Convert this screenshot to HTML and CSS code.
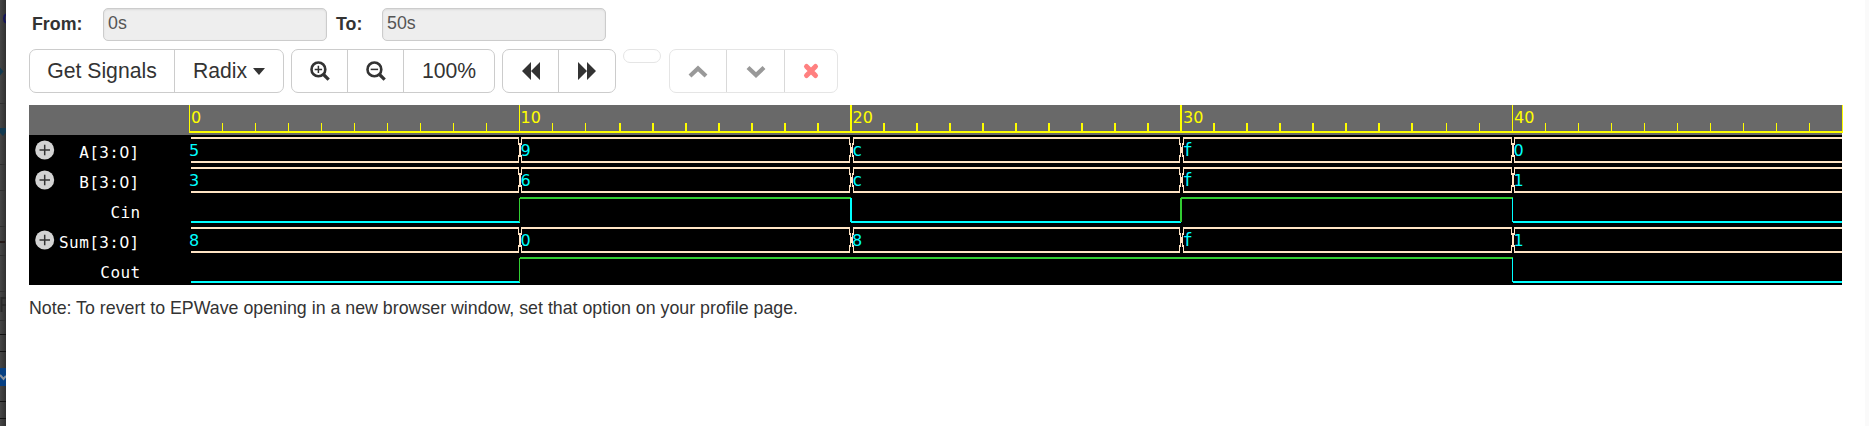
FILE: index.html
```
<!DOCTYPE html>
<html lang="en">
<head>
<meta charset="utf-8">
<title>EPWave</title>
<link rel="stylesheet" href="styles.css">
</head>
<body>
<div class="page">
  <aside class="backdrop">
    <svg width="6" height="426" viewBox="0 0 6 426">
      <path class="rule" d="M0 103.500h6M0 164.500h6M0 190.500h6M0 226.500h6M0 255.500h6M0 291.500h6M0 320.500h6"/>
      <path class="rule-dark" d="M0 334.500h6M0 351.500h6M0 401.500h6M0 418.500h6"/>
      <path class="mark" d="M0 67.500l3.500 4-3.500 4zM0 128h6v4l-3 4-3-3z"/>
      <path class="letter" d="M6 14.500q-2 1-2 4t2 4"/>
      <path class="dash" d="M0 241h5v2h-5z"/>
      <path class="box" d="M0 368h6v18H0z"/>
      <path class="check" d="M0 375l3.500 4L6 376"/>
      <path class="glyph" d="M1.500 312v-14h4.500M2 305h4"/>
    </svg>
  </aside>
  <main class="dialog">
    <form class="range">
      <label class="from" for="from">From:</label><input id="from" class="field" value="0s" readonly>
      <label class="to" for="to">To:</label><input id="to" class="field" value="50s" readonly>
    </form>
    <div class="toolbar">
      <div class="group">
        <button class="btn get">Get Signals</button>
        <button class="btn radix">Radix <span class="caret"></span></button>
      </div>
      <div class="group">
        <button class="btn first"><svg width="20" height="20" viewBox="0 0 20 20"><g fill="none" stroke="#333"><circle cx="8.400" cy="8.400" r="6.900" stroke-width="2.600"/><path d="M13 13l5.700 5.700" stroke-width="3.200"/><path d="M4.700 8.400h7.400M8.400 4.700v7.400" stroke-width="1.500"/></g></svg></button>
        <button class="btn zoom"><svg width="20" height="20" viewBox="0 0 20 20"><g fill="none" stroke="#333"><circle cx="8.400" cy="8.400" r="6.900" stroke-width="2.600"/><path d="M13 13l5.700 5.700" stroke-width="3.200"/><path d="M4.700 8.400h7.400" stroke-width="1.500"/></g></svg></button>
        <button class="btn full">100%</button>
      </div>
      <div class="group">
        <button class="btn first"><svg width="20" height="20" viewBox="0 0 20 20"><path fill="#333" d="M10 1v18L1 10zM19 1v18L10 10z"/></svg></button>
        <button class="btn forward"><svg width="20" height="20" viewBox="0 0 20 20"><path fill="#333" d="M1 1v18L10 10zM10 1v18L19 10z"/></svg></button>
      </div>
      <div class="empty"></div>
      <div class="group muted">
        <button class="btn up"><svg width="20" height="20" viewBox="0 0 20 20"><path class="chev" d="M2 15l8-7.500 8 7.500"/></svg></button>
        <button class="btn down"><svg width="20" height="20" viewBox="0 0 20 20"><path class="chev" d="M2 6.500l8 7.500 8-7.500"/></svg></button>
        <button class="btn remove"><svg width="20" height="20" viewBox="0 0 20 20"><path class="cross" d="M5.500 5.500l9 9M14.500 5.500l-9 9"/></svg></button>
      </div>
    </div>
    <svg class="wave" id="wave" width="1814" height="180" viewBox="29 105 1814 180"></svg>
    <p class="note">Note: To revert to EPWave opening in a new browser window, set that option on your profile page.</p>
  </main>
</div>
<script src="wave.js"></script>
</body>
</html>
```
FILE: styles.css
```
* { box-sizing: border-box; }
body { margin: 0; background: #fff; color: #333; font: 17.5px "Liberation Sans", Arial, sans-serif; }
.page { display: flex; height: 426px; overflow: hidden; }
.backdrop { flex: 0 0 6px; background: linear-gradient(90deg, #464646, #303030); }
.backdrop svg { display: block; fill: none; }
.rule { stroke: #303030; }
.rule-dark { stroke: #111; }
.mark { fill: #12394f; }
.letter { stroke: #14145a; stroke-width: 2; }
.dash { fill: #251a18; }
.box { fill: #064083; }
.check { stroke: #8a929c; stroke-width: 2; }
.glyph { stroke: #292929; stroke-width: 2; }
.dialog { flex: 1; padding: 8px 0 0 23px; border-right: 4px solid #fafafa; }
.range { display: flex; height: 33px; align-items: center; }
.range label { font-weight: bold; padding-left: 3px; height: 22px; line-height: 20px; }
.from { width: 74px; }
.to { width: 49px; margin-left: 6px; }
.field { width: 224px; height: 33px; margin: 0; padding: 0 4px 2px; border: 1px solid #ccc; border-radius: 5px; background: #eee; color: #555; font: inherit; box-shadow: inset 0 1px 2px rgba(0,0,0,.08); }
.range, .note { font-size: 17.8px; }
.toolbar { display: flex; margin-top: 8px; height: 44px; gap: 7px; }
.group { display: flex; height: 44px; border: 1px solid #ccc; border-radius: 7px; }
.btn { display: flex; align-items: center; justify-content: center; margin: 0; padding: 0; border: 0; background: none; color: #333; font: 21.2px "Liberation Sans", Arial, sans-serif; white-space: nowrap; }
.btn + .btn { border-left: 1px solid #ccc; }
.btn svg { display: block; }
.get { width: 144px; }
.radix { width: 109px; gap: 6px; }
.caret { border: 6.5px solid transparent; border-top: 7px solid #333; border-bottom: 0; }
.first { width: 55px; }
.zoom { width: 56px; }
.forward { width: 57px; }
.full { width: 91px; }
.empty { width: 38px; height: 14px; border: 1px solid #e5e5e5; border-radius: 7px; }
.muted { border-color: #e5e5e5; margin-left: 1px; }
.muted .btn + .btn { border-color: #d9d9d9; }
.up { width: 56px; }
.down { width: 58px; }
.remove { width: 53px; }
.chev { fill: none; stroke: #999; stroke-width: 4.200; }
.cross { stroke: #ff8080; stroke-width: 5; stroke-linecap: round; }
.wave { display: block; margin-top: 12px; }
.ground { fill: #000; }
.head { fill: #696969; }
.yellow { fill: #ff0; }
.time { font: 16px "DejaVu Sans", sans-serif; fill: #ff0; }
.name { font: 16px "DejaVu Sans Mono", monospace; letter-spacing: .4px; fill: #fff; text-anchor: end; }
.zero { font-family: "DejaVu Sans", sans-serif; letter-spacing: 0; }
.value { font: 16px "DejaVu Sans", sans-serif; fill: #0ff; }
.hex { font: 17px "DejaVu Sans Mono", monospace; fill: #0ff; }
.bus { fill: #ffe4c4; }
.high { fill: #32cd32; }
.low { fill: #0ff; }
.note { margin: 12px 0 0; line-height: 22px; }
```
FILE: wave.js
```
const NS = "http://www.w3.org/2000/svg";
const svg = document.getElementById("wave");
function add(tag, attrs, text) {
  const el = document.createElementNS(NS, tag);
  for (const k in attrs) el.setAttribute(k, attrs[k]);
  if (text !== undefined) el.textContent = text;
  svg.appendChild(el);
  return el;
}
const rect = (cls, x, y, w, h) => add("rect", { class: cls, x, y, width: w, height: h });

// Time ruler
const edges = [189, 519, 850, 1180, 1512, 1842];
const thick = [1, 1, 2, 2, 1, 1];
rect("ground", 29, 105, 1813, 180);
rect("head", 29, 105, 1813, 30);
rect("yellow", 189, 131, 1654, 2);
for (let i = 0; i <= 50; i++) {
  const x = i < 13 ? 189 + 33 * i : i < 38 ? 619 + 33 * (i - 13) : 1512 + 33 * (i - 40);
  const w = i < 13 || i >= 38 ? 1 : 2;
  const major = i % 10 === 0;
  rect("yellow", x, major ? 105 : 123, w, major ? 26 : 8);
}
["0", "10", "20", "30", "40"].forEach((t, i) =>
  add("text", { class: "time", x: [191, 520.5, 852.5, 1183, 1514][i], y: 123 }, t));

// Signals
function label(x, y, name) {
  const text = add("text", { class: "name", x, y });
  for (const part of name.split(/(0)/)) {
    const span = document.createElementNS(NS, "tspan");
    if (part === "0") span.setAttribute("class", "zero");
    span.textContent = part;
    text.appendChild(span);
  }
}
function crossing(e, t, y) {
  const right = e + t + 2;
  for (const [top, h] of [[2, 8], [20, 8]]) {
    rect("bus", e - 1, y + top, 1, h);
    rect("bus", right - 1 + (t === 2 ? 0 : 0), y + top, 1, h);
  }
  rect("bus", e, y + 8, 1, 14);
  rect("bus", right - 2, y + 8, 1, 14);
  rect("bus", e, y + 12, right - 1 - e, 6);
}
function bus(y, name, values) {
  add("circle", { cx: 44.700, cy: y + 15, r: 9.500, fill: "#d3d3d3" });
  add("path", { d: `M39.500 ${y + 15}h10.500M44.700 ${y + 9.800}v10.500`, stroke: "#333", "stroke-width": 1.500 });
  label(139.5, y + 23, name);
  for (let i = 0; i < 5; i++) {
    const a = i ? edges[i] + thick[i] + 1 : 191, b = i < 4 ? edges[i + 1] : 1842;
    rect("bus", a, y + 2, b - a, 2);
    rect("bus", a, y + 26, b - a, 2);
    if (i) crossing(edges[i], thick[i], y);
    const hex = /[a-f]/.test(values[i]);
    add("text", { class: hex ? "hex" : "value", x: [189, 520.500, 852, 1182.500, 1513.500][i], y: y + 21 }, values[i]);
  }
}
function bit(y, name, levels) {
  label(140.5, y + 23, name);
  for (let i = 0; i < 5; i++) {
    const a = i ? edges[i] + 1 : 191, b = i < 4 ? edges[i + 1] + 1 : 1842;
    const cls = levels[i] ? "high" : "low";
    rect(cls, a, y + (levels[i] ? 2 : 26), b - a, 2);
    if (i && levels[i] !== levels[i - 1]) rect(cls, edges[i], y + 3, thick[i], 24);
  }
}
bus(135, "A[3:0]", "59cf0");
bus(165, "B[3:0]", "36cf1");
bit(195, "Cin", [0, 1, 0, 1, 0]);
bus(225, "Sum[3:0]", "808f1");
bit(255, "Cout", [0, 1, 1, 1, 0]);
```
